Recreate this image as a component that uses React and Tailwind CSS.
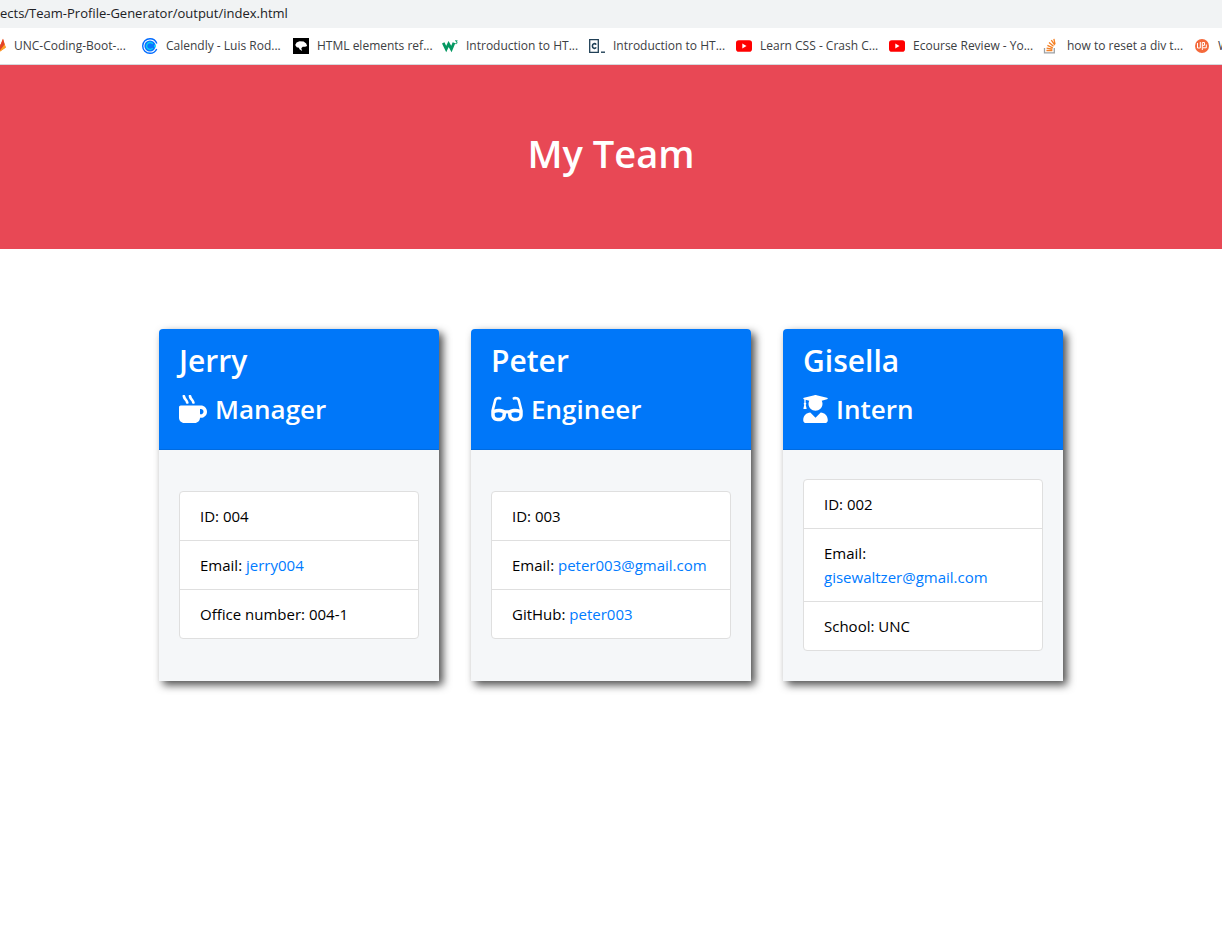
import { FaGlasses, FaMugHot, FaUserGraduate } from "react-icons/fa";

function GitlabIcon() {
  return (
    <svg viewBox="0 0 16 16" className="size-4 shrink-0" aria-hidden="true">
      <path d="M8 15 0.6 9.4 3 1.6 5.4 6.6h5.2L13 .8l2.8 8.6z" fill="#fc6d26" />
      <path d="M8 15 10.6 6.6 13 .8l1.6 5.8z" fill="#e24329" />
      <path d="M8 15 14.6 6.6l1.2 2.8z" fill="#fca326" />
    </svg>
  );
}

function CalendlyIcon() {
  return (
    <svg viewBox="0 0 16 16" className="size-4 shrink-0" fill="none" aria-hidden="true">
      <circle cx="8" cy="8" r="7.3" stroke="#006bff" strokeWidth="1.4" strokeDasharray="40 6" strokeDashoffset="-3" />
      <circle cx="8" cy="8" r="5.6" fill="#0a74ff" />
      <path d="M10.8 10.2A3.5 3.5 0 1 1 10.8 5.8" stroke="#0ad0f0" strokeWidth="1.3" />
      <path d="M13 6.8v2.4" stroke="#0ae8f0" strokeWidth="1.6" />
    </svg>
  );
}

function MdnIcon() {
  return (
    <svg viewBox="0 0 16 16" className="size-4 shrink-0" aria-hidden="true">
      <path d="M0 0h16v16H0z" fill="#000" />
      <path d="M2.2 7 3.6 4.6 6.6 3.2l4 .2 2.6 2 .9 2.6-2 .8-2.4-.1-1.4 1.6.8 2.6-2.6-1.6-.6-1.6-2.2-.4z" fill="#fff" />
    </svg>
  );
}

function SchoolsIcon() {
  return (
    <svg viewBox="0 0 16 16" className="size-4 shrink-0" fill="none" aria-hidden="true">
      <path d="M1.2 4.8 4.2 11 6.6 6 9.4 11 12 4.8" stroke="#059862" strokeWidth="2.8" />
      <path d="M13 2.8h2.3l-1.2 1.2c1.8.2 1.4 2-.9 1.6" stroke="#059862" strokeWidth="0.9" />
    </svg>
  );
}

function CodecademyIcon() {
  return (
    <svg viewBox="0 0 16 16" className="size-4 shrink-0" fill="none" stroke="#204056" aria-hidden="true">
      <path d="M.7 1.7h8.6v12.6H.7z" strokeWidth="1.3" />
      <path d="M7.2 6.6C6 4.9 3.4 5.6 3.4 8s2.6 3.1 3.8 1.4" strokeWidth="1.6" />
      <path d="M12 14.2h4" strokeWidth="1.4" />
    </svg>
  );
}

function YoutubeIcon() {
  return (
    <svg viewBox="0 0 16 16" className="size-4 shrink-0" aria-hidden="true">
      <rect y="2.3" width="16" height="11.4" rx="2.8" fill="#f00" />
      <path d="M6.3 5.6v4.8L10.5 8z" fill="#fff" />
    </svg>
  );
}

function StackOverflowIcon() {
  return (
    <svg viewBox="0 0 16 16" className="size-4 shrink-0" fill="none" aria-hidden="true">
      <path d="M1.5 10v4.8h9.8V10" stroke="#9da0a3" strokeWidth="1.3" />
      <path d="M3.4 12.5h6M3.6 10.1l5.8 1.1M4.4 7.3l5.4 2.5M6 4.5l4.5 3.8M8.3 2.2l3.5 4.8M10.9.8l1.1 5.4" stroke="#f48024" strokeWidth="1.3" />
    </svg>
  );
}

function BadgeIcon() {
  return (
    <svg viewBox="0 0 16 16" className="size-4 shrink-0" fill="none" aria-hidden="true">
      <circle cx="8" cy="8" r="7" fill="#f4693b" />
      <path d="M3.5 5v5h2.8V4M8.3 12V4.5h2.2v2.8H8.3M8.8 9.8h3.5V6.5" stroke="#fff" strokeWidth="1" />
    </svg>
  );
}

const bookmarks = [
  { Icon: GitlabIcon, text: "UNC-Coding-Boot-...", width: "w-28" },
  { Icon: CalendlyIcon, text: "Calendly - Luis Rod...", width: "w-[111px]" },
  { Icon: MdnIcon, text: "HTML elements ref...", width: "w-[109px]" },
  { Icon: SchoolsIcon, text: "Introduction to HT...", width: "w-[107px]" },
  { Icon: CodecademyIcon, text: "Introduction to HT...", width: "w-[107px]" },
  { Icon: YoutubeIcon, text: "Learn CSS - Crash C...", width: "w-[113px]" },
  { Icon: YoutubeIcon, text: "Ecourse Review - Yo...", width: "w-[114px]" },
  { Icon: StackOverflowIcon, text: "how to reset a div t...", width: "w-[111px]" },
  { Icon: BadgeIcon, text: "W3Schools", width: "w-28" },
];

const team = [
  {
    name: "Jerry",
    role: "Manager",
    Icon: FaMugHot,
    iconWidth: "w-7",
    rows: [
      { label: "ID", value: "004" },
      { label: "Email", value: "jerry004", href: "mailto:jerry004" },
      { label: "Office number", value: "004-1" },
    ],
  },
  {
    name: "Peter",
    role: "Engineer",
    Icon: FaGlasses,
    iconWidth: "w-8",
    rows: [
      { label: "ID", value: "003" },
      { label: "Email", value: "peter003@gmail.com", href: "mailto:peter003@gmail.com" },
      { label: "GitHub", value: "peter003", href: "https://github.com/peter003" },
    ],
  },
  {
    name: "Gisella",
    role: "Intern",
    Icon: FaUserGraduate,
    iconWidth: "w-[25px]",
    rows: [
      { label: "ID", value: "002" },
      { label: "Email", value: "gisewaltzer@gmail.com", href: "mailto:gisewaltzer@gmail.com" },
      { label: "School", value: "UNC" },
    ],
  },
];

function BrowserBar() {
  return (
    <div className="overflow-hidden border-b border-[#d5d8dc]">
      <div className="flex h-7 items-center bg-[#f1f3f4] text-[13px] text-[#202124]">
        <span className="whitespace-nowrap">ects/Team-Profile-Generator/output/index.html</span>
      </div>
      <nav className="-ml-2.5 flex h-9 items-center gap-4 text-xs text-[#3c4043]" aria-label="Bookmarks">
        {bookmarks.map(({ Icon, text, width }, i) => (
          <a key={i} href="#" className="flex shrink-0 items-center gap-2">
            <Icon />
            <span className={`${width} whitespace-nowrap`}>{text}</span>
          </a>
        ))}
      </nav>
    </div>
  );
}

function MemberCard({ name, role, Icon, iconWidth, rows }) {
  return (
    <article className="flex min-h-[352px] w-[280px] flex-col rounded-t bg-[#f5f7f9] shadow-[4px_4px_8px_rgba(0,0,0,0.7)]">
      <header className="rounded-t border-b border-[#006be0] bg-[#0077f9] px-5 pt-3 pb-5 text-white">
        <h2 className="mb-2 text-[30px] leading-10 font-semibold">{name}</h2>
        <h3 className="flex items-center gap-2 text-[26px] leading-10 font-semibold">
          <Icon className={`h-7 ${iconWidth}`} aria-hidden="true" />
          {role}
        </h3>
      </header>
      <div className="flex grow flex-col justify-center px-5 pt-5 pb-[22px]">
        <ul className="divide-y divide-[#dfdfdf] rounded border border-[#dfdfdf] bg-white text-[15px] leading-6 text-black">
          {rows.map(({ label, value, href }) => (
            <li key={label} className="px-5 py-3">
              {label}:{" "}
              {href ? (
                <a href={href} className="text-[#007bff]">
                  {value}
                </a>
              ) : (
                value
              )}
            </li>
          ))}
        </ul>
      </div>
    </article>
  );
}

export default function App() {
  return (
    <div className="min-h-screen bg-white font-['Open_Sans','Noto_Sans',sans-serif]">
      <BrowserBar />
      <header className="flex items-center justify-center bg-[#e84855] px-8 pt-16 pb-[72px]">
        <h1 className="text-[38px] leading-12 font-semibold text-white">My Team</h1>
      </header>
      <main className="flex flex-wrap justify-center gap-8 px-4 py-20">
        {team.map((member) => (
          <MemberCard key={member.name} {...member} />
        ))}
      </main>
    </div>
  );
}
